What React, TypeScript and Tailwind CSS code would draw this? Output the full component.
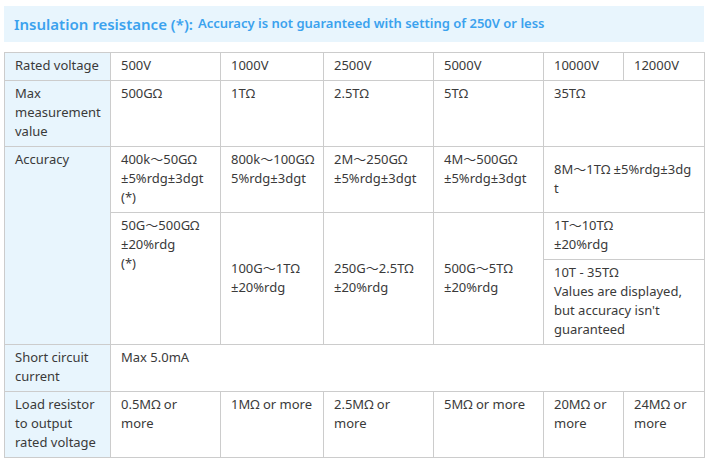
import React from 'react'

const td = 'border border-[#cccccc] pl-[10px] pr-[6px] pt-[3px] pb-[5px] align-top'
const th = td + ' bg-[#e8f5fd] font-normal text-left'

export default function App() {
  return (
    <div className="min-h-screen bg-white pt-[6px] pl-[4px]" style={{ fontFamily: "'Noto Sans', 'Noto Sans CJK JP', sans-serif" }}>
      {/* Title bar */}
      <div className="w-[700px] h-[36px] bg-[#e8f5fd] flex items-center pl-[10px] text-[#3ba2ee]">
        <span className="text-[15px] font-semibold">Insulation resistance (*):</span>
        <span className="text-[13px] font-semibold ml-[5px]">Accuracy is not guaranteed with setting of 250V or less</span>
      </div>

      <table className="mt-[10px] w-[700px] table-fixed border-collapse text-[13px] leading-[19px] text-[#3a3a3a]">
        <colgroup>
          <col className="w-[106px]" />
          <col className="w-[110px]" />
          <col className="w-[103px]" />
          <col className="w-[110px]" />
          <col className="w-[110px]" />
          <col className="w-[80px]" />
          <col className="w-[81px]" />
        </colgroup>
        <tbody>
          <tr>
            <th className={th}>Rated voltage</th>
            <td className={td}>500V</td>
            <td className={td}>1000V</td>
            <td className={td}>2500V</td>
            <td className={td}>5000V</td>
            <td className={td}>10000V</td>
            <td className={td}>12000V</td>
          </tr>
          <tr>
            <th className={th}>Max<br />measurement<br />value</th>
            <td className={td}>500GΩ</td>
            <td className={td}>1TΩ</td>
            <td className={td}>2.5TΩ</td>
            <td className={td}>5TΩ</td>
            <td className={td} colSpan={2}>35TΩ</td>
          </tr>
          <tr>
            <th className={th} rowSpan={3}>Accuracy</th>
            <td className={td}>400k～50GΩ<br />±5%rdg±3dgt<br />(*)</td>
            <td className={td}>800k～100GΩ<br />5%rdg±3dgt</td>
            <td className={td}>2M～250GΩ<br />±5%rdg±3dgt</td>
            <td className={td}>4M～500GΩ<br />±5%rdg±3dgt</td>
            <td className={td + ' !align-middle'} colSpan={2}>8M～1TΩ ±5%rdg±3dg<br />t</td>
          </tr>
          <tr>
            <td className={td} rowSpan={2}>50G～500GΩ<br />±20%rdg<br />(*)</td>
            <td className={td + ' !align-middle'} rowSpan={2}>100G～1TΩ<br />±20%rdg</td>
            <td className={td + ' !align-middle'} rowSpan={2}>250G～2.5TΩ<br />±20%rdg</td>
            <td className={td + ' !align-middle'} rowSpan={2}>500G～5TΩ<br />±20%rdg</td>
            <td className={td} colSpan={2}>1T～10TΩ<br />±20%rdg</td>
          </tr>
          <tr>
            <td className={td} colSpan={2}>10T - 35TΩ<br />Values are displayed,<br />but accuracy isn't<br />guaranteed</td>
          </tr>
          <tr>
            <th className={th}>Short circuit<br />current</th>
            <td className={td} colSpan={6}>Max 5.0mA</td>
          </tr>
          <tr>
            <th className={th}>Load resistor<br />to output<br />rated voltage</th>
            <td className={td}>0.5MΩ or<br />more</td>
            <td className={td}>1MΩ or more</td>
            <td className={td}>2.5MΩ or<br />more</td>
            <td className={td}>5MΩ or more</td>
            <td className={td}>20MΩ or<br />more</td>
            <td className={td}>24MΩ or<br />more</td>
          </tr>
        </tbody>
      </table>
    </div>
  )
}
